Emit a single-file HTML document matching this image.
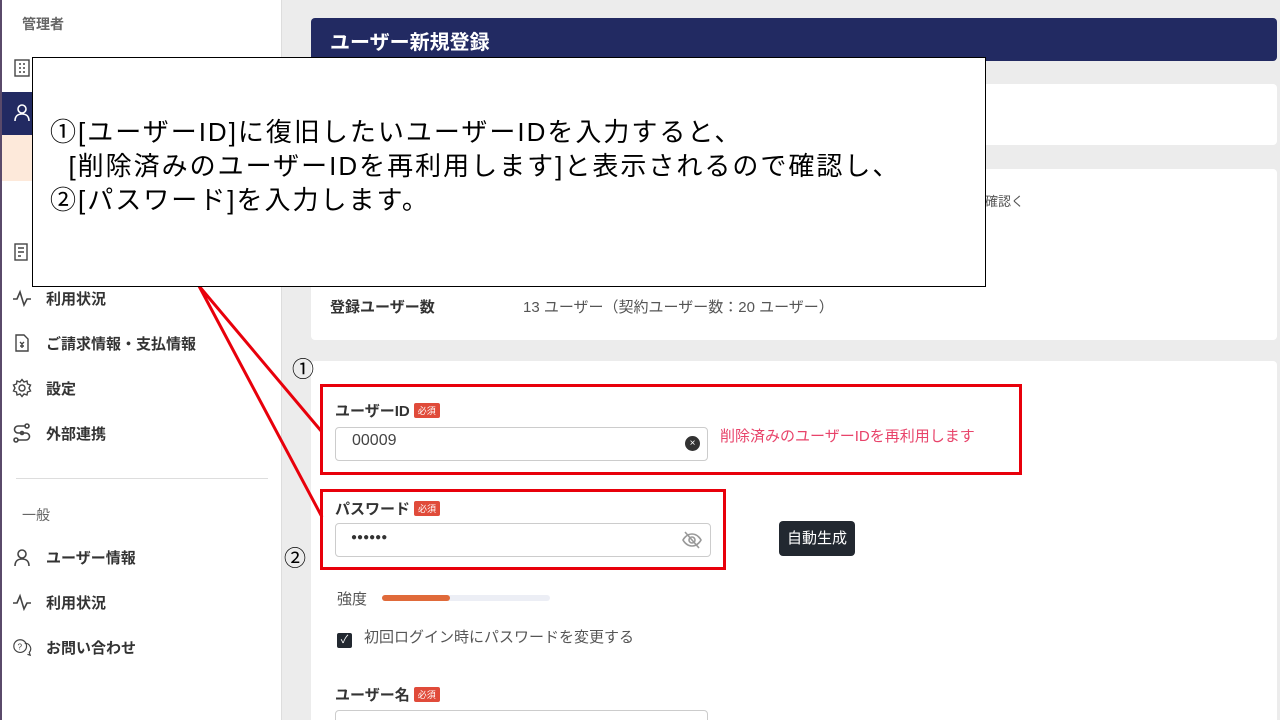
<!DOCTYPE html>
<html><head><meta charset="utf-8"><style>
*{margin:0;padding:0;box-sizing:border-box}
html,body{width:1280px;height:720px;overflow:hidden}
body{position:relative;background:#ececec;font-family:"Liberation Sans","Noto Sans CJK JP",sans-serif;color:#333}
.a{position:absolute}
.side{left:0;top:0;width:282px;height:720px;background:#fff;border-left:2px solid #5a4a6a;border-right:1px solid #ddd}
.nav{font-size:15px;font-weight:bold;color:#333;left:46px}
.ic{left:12px;width:20px;height:20px}
.card{background:#fff;border-radius:4px;left:311px;width:966px}
.lbl{font-size:15px;font-weight:bold;color:#333}
.badge{display:inline-block;background:#e04b3a;color:#fff;font-size:9px;padding:1px 4px;border-radius:2px;vertical-align:2px;margin-left:4px;font-weight:normal}
.inp{border:1px solid #ccc;border-radius:4px;background:#fff}
.red{border:3px solid #e8000b}
</style></head><body>
<div class="a side"></div>
<div class="a" style="left:22px;top:14px;font-size:14px;color:#666;font-weight:bold">管理者</div>
<div class="a" style="left:2px;top:92px;width:280px;height:43px;background:#222a62"></div>
<div class="a" style="left:2px;top:135px;width:280px;height:46px;background:#fde9da"></div>
<svg class="a ic" style="top:58px" viewBox="0 0 20 20" fill="none" stroke="#444" stroke-width="1.4"><rect x="3" y="2" width="14" height="16"/><path d="M7 6h2M11 6h2M7 10h2M11 10h2M7 14h2M11 14h2"/></svg>
<svg class="a ic" style="top:102px" viewBox="0 0 20 20" fill="none" stroke="#fff" stroke-width="1.6"><circle cx="10" cy="7" r="4"/><path d="M3 19c0-5 3-7 7-7s7 2 7 7"/></svg>
<svg class="a ic" style="top:242px" viewBox="0 0 20 20" fill="none" stroke="#444" stroke-width="1.4"><rect x="3" y="2" width="12" height="16"/><path d="M6 6h6M6 10h6M6 14h3"/></svg>
<svg class="a ic" style="top:288px" viewBox="0 0 20 20" fill="none" stroke="#444" stroke-width="1.6"><path d="M1 11h4l3-7 4 13 3-6h4"/></svg>
<div class="a nav" style="top:288px">利用状況</div>
<svg class="a ic" style="top:333px" viewBox="0 0 20 20" fill="none" stroke="#444" stroke-width="1.4"><path d="M4 2h8l4 4v12H4z"/><path d="M8 9l2 2 2-2M10 11v4M8 13h4"/></svg>
<div class="a nav" style="top:333px">ご請求情報・支払情報</div>
<svg class="a ic" style="top:378px" viewBox="0 0 20 20" fill="none" stroke="#444" stroke-width="1.4"><circle cx="10" cy="10" r="3"/><path d="M10 1.5l2 2.5 3-1 .5 3 3 1-1.5 3 1.5 3-3 1-.5 3-3-1-2 2.5-2-2.5-3 1-.5-3-3-1 1.5-3-1.5-3 3-1 .5-3 3 1z"/></svg>
<div class="a nav" style="top:378px">設定</div>
<svg class="a ic" style="top:423px" viewBox="0 0 20 20" fill="none" stroke="#444" stroke-width="1.6"><circle cx="15" cy="3" r="2"/><circle cx="4" cy="17" r="2"/><circle cx="10" cy="10" r="1.5"/><path d="M13 3H6a3.5 3.5 0 000 7h8a3.5 3.5 0 010 7H6"/></svg>
<div class="a nav" style="top:423px">外部連携</div>
<div class="a" style="left:16px;top:478px;width:252px;height:1px;background:#ddd"></div>
<div class="a" style="left:22px;top:505px;font-size:14px;color:#666">一般</div>
<svg class="a ic" style="top:547px" viewBox="0 0 20 20" fill="none" stroke="#444" stroke-width="1.6"><circle cx="10" cy="7" r="4"/><path d="M3 19c0-5 3-7 7-7s7 2 7 7"/></svg>
<div class="a nav" style="top:547px">ユーザー情報</div>
<svg class="a ic" style="top:592px" viewBox="0 0 20 20" fill="none" stroke="#444" stroke-width="1.6"><path d="M1 11h4l3-7 4 13 3-6h4"/></svg>
<div class="a nav" style="top:592px">利用状況</div>
<svg class="a ic" style="top:637px" viewBox="0 0 22 20" fill="none" stroke="#444" stroke-width="1.3"><circle cx="9" cy="9" r="7"/><path d="M14 6a6 6 0 015 10l1 3-3-1"/><text x="6" y="13" font-size="9" fill="#444" stroke="none">?</text></svg>
<div class="a nav" style="top:637px">お問い合わせ</div>

<div class="a" style="left:311px;top:18px;width:966px;height:43px;background:#222a62;border-radius:4px"></div>
<div class="a" style="left:330px;top:26px;font-size:20px;font-weight:bold;color:#fff">ユーザー新規登録</div>
<div class="a card" style="top:84px;height:61px"></div>
<div class="a card" style="top:169px;height:171px"></div>
<div class="a" style="left:985px;top:191px;font-size:13px;color:#555">確認く</div>
<div class="a" style="left:330px;top:296px;font-size:15px;font-weight:bold">登録ユーザー数</div>
<div class="a" style="left:523px;top:296px;font-size:15px;color:#555">13 ユーザー（契約ユーザー数：20 ユーザー）</div>
<div class="a card" style="top:361px;height:359px;border-radius:4px 4px 0 0"></div>

<div class="a lbl" style="left:335px;top:400px">ユーザーID<span class="badge">必須</span></div>
<div class="a inp" style="left:335px;top:427px;width:373px;height:34px"></div>
<div class="a" style="left:352px;top:432px;font-size:16px;color:#444">00009</div>
<div class="a" style="left:685px;top:436px;width:15px;height:15px;border-radius:50%;background:#333;color:#fff;font-size:10px;text-align:center;line-height:15px">×</div>
<div class="a" style="left:720px;top:425px;font-size:15px;color:#e8436a">削除済みのユーザーIDを再利用します</div>

<div class="a lbl" style="left:335px;top:498px">パスワード<span class="badge">必須</span></div>
<div class="a inp" style="left:335px;top:523px;width:376px;height:34px"></div>
<div class="a" style="left:351px;top:532px;font-size:10px;color:#333">●●●●●●</div>
<svg class="a" style="left:682px;top:531px" width="20" height="18" viewBox="0 0 20 18" fill="none" stroke="#999" stroke-width="1.6"><path d="M1 9s3-6 9-6 9 6 9 6-3 6-9 6-9-6-9-6z"/><circle cx="10" cy="9" r="3"/><path d="M3 1l14 16"/></svg>
<div class="a" style="left:779px;top:521px;width:76px;height:35px;background:#222830;border-radius:4px;color:#fff;font-size:15px;text-align:center;line-height:35px">自動生成</div>

<div class="a" style="left:337px;top:588px;font-size:15px;color:#555">強度</div>
<div class="a" style="left:382px;top:595px;width:168px;height:6px;background:#eceef5;border-radius:3px"></div>
<div class="a" style="left:382px;top:595px;width:68px;height:6px;background:#e06a3a;border-radius:3px"></div>
<div class="a" style="left:337px;top:633px;width:15px;height:15px;background:#222830;border-radius:2px;color:#fff;font-size:11px;text-align:center;line-height:15px">✓</div>
<div class="a" style="left:364px;top:626px;font-size:15px;color:#555">初回ログイン時にパスワードを変更する</div>
<div class="a lbl" style="left:335px;top:684px">ユーザー名<span class="badge">必須</span></div>
<div class="a inp" style="left:335px;top:710px;width:373px;height:34px"></div>

<div class="a red" style="left:320px;top:384px;width:702px;height:91px"></div>
<div class="a red" style="left:320px;top:489px;width:406px;height:81px"></div>
<svg class="a" style="left:0;top:0" width="1280" height="720"><path d="M199 286L322 432M199 286L322 517" stroke="#e8000b" stroke-width="3" fill="none"/></svg>
<div class="a" style="left:292px;top:352px;font-size:22px;color:#000">①</div>
<div class="a" style="left:284px;top:541px;font-size:22px;color:#000">②</div>

<div class="a" style="left:32px;top:57px;width:954px;height:230px;background:#fff;border:1px solid #000"></div>
<div class="a" style="left:50px;top:115px;font-size:26px;letter-spacing:2px;line-height:34px;color:#000;white-space:pre">①[ユーザーID]に復旧したいユーザーIDを入力すると、
  [削除済みのユーザーIDを再利用します]と表示されるので確認し、
②[パスワード]を入力します。</div>
</body></html>
